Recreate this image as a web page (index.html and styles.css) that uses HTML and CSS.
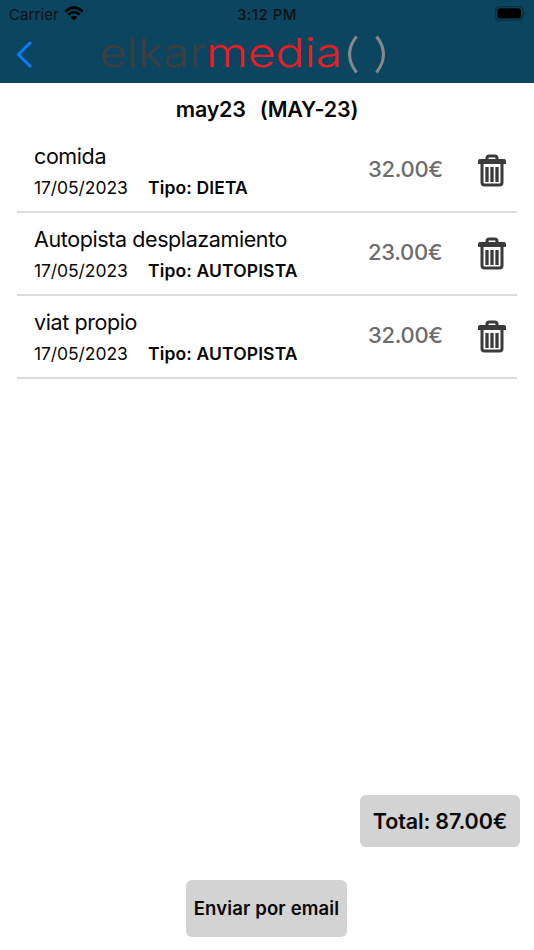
FILE: index.html
```
<!DOCTYPE html>
<html lang="es">
<head>
<meta charset="utf-8">
<title>may23</title>
<link rel="stylesheet" href="styles.css">
</head>
<body>
<svg width="0" height="0" class="defs">
  <symbol id="trash" viewBox="0 0 28 33">
    <path d="M9 6V4.200Q9 2 11.200 2h5.600Q19 2 19 4.200V6" fill="none" stroke="#3b3b3c" stroke-width="3"/>
    <path d="M2 5h24q2 0 2 2v3H0V7q0-2 2-2z" fill="#3b3b3c"/>
    <path d="M4 9v19.500q0 2.500 2.500 2.500h15q2.500 0 2.500-2.500V9" fill="none" stroke="#3b3b3c" stroke-width="3"/>
    <path d="M9 13v15M14 13v15M19 13v15" fill="none" stroke="#3b3b3c" stroke-width="3.300"/>
  </symbol>
</svg>
<header class="header">
  <div class="status">
    <span class="carrier">Carrier</span>
    <svg class="wifi" width="20" height="15" viewBox="0 0 20 15"><g fill="none" stroke="#000" stroke-width="2.700"><path d="M1.300 5.500Q10-2.200 18.700 5.500"/><path d="M4.300 8.800Q10 3.600 15.700 8.800"/></g><path d="M6.600 11.200Q10 8.200 13.400 11.200L10 14.600z"/></svg>
    <span class="time">3:12 PM</span>
    <svg class="battery" width="32" height="15" viewBox="0 0 32 15"><rect x=".7" y=".7" width="27.300" height="13.600" rx="4" fill="none" stroke="#08313f" stroke-width="1.300"/><rect x="2.400" y="2.300" width="23.600" height="10.200" rx="2.500"/><path d="M29.300 5q2 2.500 0 5z" fill="#08313f"/></svg>
  </div>
  <nav class="nav">
    <svg class="back" width="17" height="27" viewBox="0 0 17 27"><path d="M14 2L2.300 13.500 14 25" fill="none" stroke="#0a7cff" stroke-width="3" stroke-linecap="round" stroke-linejoin="round"/></svg>
    <svg class="logo" width="300" height="55" viewBox="-8 -5 300 55">
      <text x="1" y="35" textLength="107" lengthAdjust="spacingAndGlyphs" fill="#3d3d40">elkar</text>
      <text x="108" y="35" textLength="136" lengthAdjust="spacingAndGlyphs" fill="#ed1c24">media</text>
      <g fill="none" stroke="#88888c" stroke-width="3"><path d="M258.500 4.500Q244.500 22 258.500 40.500"/><path d="M278.500 4.500Q292.500 22 278.500 40.500"/></g>
    </svg>
  </nav>
</header>
<h1 class="title"><span>may23</span><span>(MAY-23)</span></h1>
<main class="list">
  <article class="row"><div class="info"><div class="name">comida</div><div class="meta"><span class="date">17/05/2023</span><b>Tipo: DIETA</b></div></div><div class="price">32.00€</div><svg class="trash"><use href="#trash"/></svg></article>
  <article class="row"><div class="info"><div class="name">Autopista desplazamiento</div><div class="meta"><span class="date">17/05/2023</span><b>Tipo: AUTOPISTA</b></div></div><div class="price">23.00€</div><svg class="trash"><use href="#trash"/></svg></article>
  <article class="row"><div class="info"><div class="name">viat propio</div><div class="meta"><span class="date">17/05/2023</span><b>Tipo: AUTOPISTA</b></div></div><div class="price">32.00€</div><svg class="trash"><use href="#trash"/></svg></article>
</main>
<footer class="footer">
  <div class="total">Total: 87.00€</div>
  <button class="send">Enviar por email</button>
</footer>
</body>
</html>
```
FILE: styles.css
```
* { box-sizing: border-box; }
body { margin: 0; height: 950px; display: flex; flex-direction: column; background: #fff; color: #080808; font-family: Inter, "Liberation Sans", sans-serif; white-space: nowrap; overflow: hidden; }
svg { display: block; flex: none; }
.defs { position: absolute; }
.header { height: 83px; background: #0c455f; flex: none; }
.status { display: flex; align-items: center; height: 28px; padding: 0 7px 0 9px; font-size: 15px; color: #0a1215; }
.carrier { width: 55px; letter-spacing: .1px; }
.wifi { margin-top: -2px; }
.time { width: 62px; margin-left: 153px; font-weight: 500; font-size: 15px; letter-spacing: .45px; }
.battery { margin-left: auto; margin-top: -1px; }
.nav { display: flex; padding-left: 16px; }
.back { margin-top: 13px; }
.logo { margin: -1px 0 0 57px; font-size: 40px; font-weight: 350; overflow: visible; }
.title { display: flex; justify-content: center; gap: 14px; margin: 0; height: 46px; padding-top: 11px; font-size: 21.5px; line-height: 30px; font-weight: 600; letter-spacing: -.25px; flex: none; }
.list { padding: 0 17px; }
.row { display: flex; position: relative; height: 83px; padding: 11px 11px 0 17px; }
.row::after { content: ""; position: absolute; left: 0; right: 0; bottom: -1px; height: 2px; background: #dcdcdc; }
.info { width: 334px; }
.name { font-size: 21.5px; line-height: 32px; letter-spacing: -.4px; }
.meta { display: flex; font-size: 17.5px; line-height: 31px; }
.date { width: 114px; letter-spacing: -.08px; }
.meta b { font-weight: 600; letter-spacing: .13px; }
.price { width: 110px; padding-top: 11px; font-size: 22px; line-height: 36px; font-weight: 500; color: #6c6c6c; letter-spacing: -.3px; }
.trash { width: 28px; height: 33px; margin-top: 14px; }
.footer { margin-top: auto; display: flex; flex-direction: column; padding: 0 14px 13px; font-weight: 600; }
.total { align-self: flex-end; width: 160px; height: 52px; border-radius: 6px; background: #d3d3d3; text-align: center; font-size: 21.5px; line-height: 53px; letter-spacing: -.15px; }
.send { align-self: center; width: 161px; height: 57px; margin-top: 33.5px; margin-left: -1px; padding: 0; border: 0; border-radius: 6px; background: #d3d3d3; color: #080808; font: 600 18.5px/57px Inter, "Liberation Sans", sans-serif; letter-spacing: .15px; }
```
